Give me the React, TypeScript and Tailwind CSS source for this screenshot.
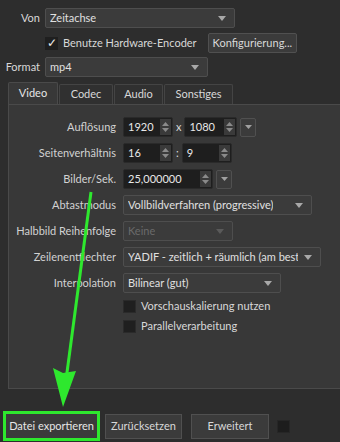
import { ReactNode } from "react";

function Caret({ dim }: { dim?: boolean }) {
  return (
    <svg width="8" height="5" viewBox="0 0 8 5" className="shrink-0">
      <path d="M0 0 L8 0 L4 5 Z" fill={dim ? "#5a5a5a" : "#a8a8a8"} />
    </svg>
  );
}

function Combo({ value, width, disabled }: { value: string; width: string; disabled?: boolean }) {
  return (
    <div
      className={`${width} h-[20px] flex items-center justify-between pl-[4px] pr-[8px] bg-[#3b3b3b] border border-[#4e4e4e] rounded-[2px] ${
        disabled ? "text-[#6a6a6a]" : "text-[#e0e0e0]"
      }`}
    >
      <span className="overflow-hidden whitespace-nowrap mr-[6px]">{value}</span>
      <Caret dim={disabled} />
    </div>
  );
}

function Spin({ value, width }: { value: string; width: string }) {
  return (
    <div className={`${width} h-[20px] flex bg-[#1e1e1e] border border-[#2a2a2a] rounded-[2px]`}>
      <span className="flex-1 pl-[4px] leading-[18px] text-[#e8e8e8]">{value}</span>
      <div className="w-[11px] my-[1px] mr-[1px] flex flex-col items-center justify-center gap-[2px] bg-[#3a3a3a]">
        <svg width="7" height="4" viewBox="0 0 7 4">
          <path d="M0 4 L3.5 0 L7 4 Z" fill="#8a8a8a" />
        </svg>
        <svg width="7" height="4" viewBox="0 0 7 4">
          <path d="M0 0 L7 0 L3.5 4 Z" fill="#8a8a8a" />
        </svg>
      </div>
    </div>
  );
}

function DropBtn() {
  return (
    <div className="w-[16px] h-[19px] flex items-center justify-center bg-[#3b3b3b] border border-[#505050] rounded-[2px]">
      <svg width="7" height="4" viewBox="0 0 7 4">
        <path d="M0 0 L7 0 L3.5 4 Z" fill="#a0a0a0" />
      </svg>
    </div>
  );
}

function Row({ label, children }: { label: string; children: ReactNode }) {
  return (
    <div className="flex items-center h-[20px]">
      <span className="w-[107px] text-right whitespace-nowrap text-[#d2d2d2]">{label}</span>
      <div className="ml-[7px] flex items-center">{children}</div>
    </div>
  );
}

function Box() {
  return <span className="w-[13px] h-[13px] bg-[#1f1f1f] border border-[#2a2a2a] inline-block" />;
}

export default function App() {
  const tabs = ["Codec", "Audio", "Sonstiges"];
  return (
    <div className="relative w-[340px] h-[442px] overflow-hidden bg-[#2d2d2d] text-[11px] text-[#d8d8d8] font-['Lato',Arial,sans-serif]">
      <div className="pt-[8px]">
        <div className="flex items-center h-[20px]">
          <span className="w-[40px] text-right">Von</span>
          <div className="ml-[5px]">
            <Combo value="Zeitachse" width="w-[190px]" />
          </div>
        </div>

        <div className="flex items-center h-[20px] mt-[5px] pl-[45px]">
          <span className="w-[13px] h-[13px] bg-[#1f1f1f] flex items-center justify-center text-[#e8e8e8] text-[12px] leading-none">
            ✓
          </span>
          <span className="ml-[5px] whitespace-nowrap">Benutze Hardware-Encoder</span>
          <div className="ml-[11px] h-[20px] px-[4px] flex items-center bg-[#3b3b3b] border border-[#505050] rounded-[2px] whitespace-nowrap">
            Konfigurierung...
          </div>
        </div>

        <div className="flex items-center h-[20px] mt-[4px]">
          <span className="w-[40px] text-right">Format</span>
          <div className="ml-[5px]">
            <Combo value="mp4" width="w-[163px]" />
          </div>
        </div>

        <div className="flex items-end h-[22px] mt-[5px] ml-[8px]">
          <div className="w-[50px] h-[22px] flex items-center justify-center bg-[#383838] border border-b-0 border-[#4a4a4a] rounded-t-[2px] text-[#e6e6e6]">
            Video
          </div>
          {tabs.map((t) => (
            <div
              key={t}
              className={`${
                t === "Codec" ? "w-[54px]" : t === "Audio" ? "w-[49px]" : "w-[69px]"
              } h-[20px] ml-[1px] flex items-center justify-center bg-[#303030] border border-b-0 border-[#444] rounded-t-[2px]`}
            >
              {t}
            </div>
          ))}
        </div>

        <div className="ml-[8px] h-[285px] bg-[#383838] border-l border-t border-b border-[#4a4a4a] pt-[12px] flex flex-col gap-[6px]">
          <Row label="Auflösung">
            <Spin value="1920" width="w-[50px]" />
            <span className="mx-[3px]">x</span>
            <Spin value="1080" width="w-[53px]" />
            <div className="ml-[3px]">
              <DropBtn />
            </div>
          </Row>
          <Row label="Seitenverhältnis">
            <Spin value="16" width="w-[50px]" />
            <span className="mx-[3px]">:</span>
            <Spin value="9" width="w-[50px]" />
          </Row>
          <Row label="Bilder/Sek.">
            <Spin value="25,000000" width="w-[90px]" />
            <div className="ml-[3px]">
              <DropBtn />
            </div>
          </Row>
          <Row label="Abtastmodus">
            <Combo value="Vollbildverfahren (progressive)" width="w-[189px]" />
          </Row>
          <Row label="Halbbild Reihenfolge">
            <Combo value="Keine" width="w-[110px]" disabled />
          </Row>
          <Row label="Zeilenentflechter">
            <Combo value="YADIF - zeitlich + räumlich (am besten)" width="w-[198px]" />
          </Row>
          <Row label="Interpolation">
            <Combo value="Bilinear (gut)" width="w-[158px]" />
          </Row>
          <div className="flex items-center h-[14px] ml-[114px]">
            <Box />
            <span className="ml-[5px]">Vorschauskalierung nutzen</span>
          </div>
          <div className="flex items-center h-[14px] ml-[114px]">
            <Box />
            <span className="ml-[5px]">Parallelverarbeitung</span>
          </div>
        </div>

        <div className="flex items-center mt-[22px] h-[30px]">
          <div className="ml-[3px] border-[3px] border-[#2ee82e] flex">
            <div className="w-[91px] h-[24px] flex items-center justify-center bg-[#3b3b3b] text-[#e6e6e6] whitespace-nowrap">
              Datei exportieren
            </div>
          </div>
          <div className="ml-[5px] w-[77px] h-[25px] flex items-center justify-center bg-[#3b3b3b] border border-[#505050] whitespace-nowrap">
            Zurücksetzen
          </div>
          <div className="ml-[9px] w-[78px] h-[25px] flex items-center justify-center bg-[#3b3b3b] border border-[#505050]">
            Erweitert
          </div>
          <span className="ml-[8px] w-[13px] h-[13px] bg-[#1d1d1d] border border-[#262626]" />
        </div>
      </div>

      <svg className="absolute left-0 top-0 pointer-events-none" width="340" height="442" viewBox="0 0 340 442">
        <line x1="91" y1="192" x2="66" y2="380" stroke="#2ee82e" strokeWidth="3" />
        <path d="M53 368 L63 373 L76 371 L63 407 Z" fill="#2ee82e" />
      </svg>
    </div>
  );
}
